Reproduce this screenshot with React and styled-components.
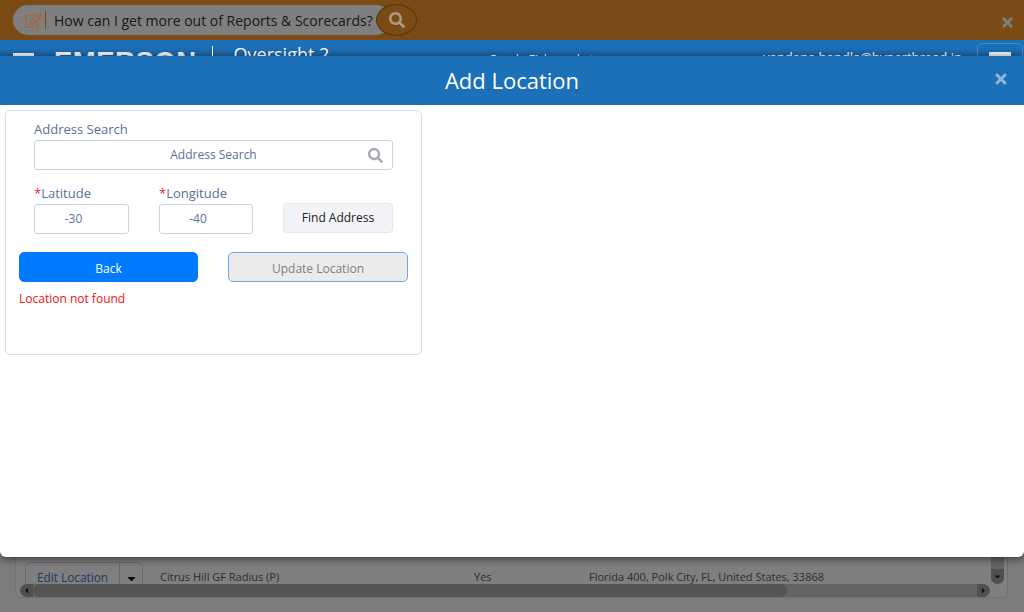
import React from "react";
import styled, { createGlobalStyle } from "styled-components";
import { FaRegEdit, FaSearch, FaTimes, FaCaretDown, FaCaretLeft, FaCaretRight } from "react-icons/fa";

const Global = createGlobalStyle`
  html, body { margin: 0; padding: 0; height: 100%; overflow: hidden; }
  body { font-family: "Open Sans", "Noto Sans", sans-serif; }
  * { box-sizing: border-box; }
`;

const Page = styled.div`
  position: relative;
  width: 1024px;
  height: 612px;
  overflow: hidden;
  background: #f8f8f8;
  display: flex;
  flex-direction: column;
`;

const Banner = styled.div`
  flex: 0 0 40px;
  background: #f4962a;
  display: flex;
  align-items: center;
  padding: 0 9px 0 13px;
`;
const Pill = styled.div`
  width: 378px;
  height: 30px;
  background: #fff;
  border-radius: 15px;
  display: flex;
  align-items: center;
  padding-left: 12px;
  color: #333;
  font-size: 14px;
  white-space: nowrap;
`;
const OverDim = styled.span`
  position: relative;
  z-index: 2;
  display: flex;
  flex: none;
  color: ${(p) => p.$color};
  font-size: ${(p) => p.$size}px;
`;
const PillRule = styled.span`
  width: 1px;
  height: 18px;
  margin: 0 8px 0 3px;
  background: #f4962a;
  flex: none;
`;
const SearchOrb = styled.span`
  width: 41px;
  height: 32px;
  margin-left: -15px;
  border-radius: 50%;
  background: #f4962a;
  border: 1px solid #a8661c;
  display: flex;
  align-items: center;
  justify-content: center;
`;
const BannerClose = styled.span`
  margin-left: auto;
  margin-top: 5px;
  color: #fff;
  font-size: 15px;
  display: flex;
`;

const Nav = styled.div`
  position: relative;
  z-index: 2;
  flex: 0 0 40px;
  background: linear-gradient(#1c70b8 0, #1c70b8 8px, #1c5f9c 16px);
  color: #fff;
  display: flex;
  align-items: flex-start;
  overflow: hidden;
`;
const NavBurger = styled.span`
  width: 21px;
  height: 4px;
  margin: 13px 20px 0 13px;
  background: #f0f0f0;
  flex: none;
`;
const Brand = styled.span`
  font-family: "Liberation Sans", sans-serif;
  font-weight: 700;
  font-size: 27.5px;
  line-height: 30px;
  margin-top: 7px;
  letter-spacing: 0.5px;
  color: #f2f2f2;
`;
const NavRule = styled.span`
  width: 1px;
  height: 30px;
  margin: 6px 21px 0 15px;
  background: #fff;
`;
const AppName = styled.span`
  font-size: 18px;
  line-height: 24px;
  margin-top: 2px;
`;
const Farm = styled.span`
  font-size: 12px;
  line-height: 16px;
  margin: 12px 0 0 161px;
`;
const Email = styled.span`
  font-size: 13px;
  line-height: 18px;
  margin: 8px 0 0 auto;
`;
const NavMenu = styled.span`
  width: 46px;
  height: 34px;
  margin: 3px 1px 0 15px;
  border: 1px solid #3f8ccf;
  border-radius: 5px;
  display: flex;
  justify-content: center;
  padding-top: 8px;
  &::before { content: ""; width: 22px; height: 6px; background: #f0f0f0; border-radius: 1px; }
`;

const Panel = styled.div`
  margin: auto 16px 14px 15px;
  height: 60px;
  background: #ffffff;
  border: 1px solid #dfe3ea;
  border-radius: 5px;
  position: relative;
  overflow: hidden;
  display: flex;
  align-items: flex-start;
  padding: 23px 0 0 9px;
  font-size: 11px;
  color: #505a70;
`;
const SplitBtn = styled.div`
  width: 118px;
  height: 30px;
  flex: none;
  border: 1px solid #cfd3dc;
  border-radius: 5px;
  display: flex;
  color: #3a6fd0;
  font-size: 11.8px;
`;
const SplitLabel = styled.span`
  flex: 1;
  padding: 6px 0 0 11px;
  border-right: 1px solid #cfd3dc;
`;
const SplitCaret = styled.span`
  width: 22px;
  display: flex;
  justify-content: center;
  padding-top: 9px;
  color: #111;
  font-size: 13px;
`;
const Cell = styled.span`
  flex: none;
  width: ${(p) => p.$w}px;
  padding-top: 7px;
  white-space: nowrap;
`;
const HBar = styled.div`
  position: absolute;
  left: 4px;
  right: 17px;
  bottom: 0;
  height: 13px;
  background: #cacaca;
  border-radius: 7px;
  overflow: hidden;
`;
const HThumb = styled.div`
  position: absolute;
  left: 13px;
  width: 754px;
  top: 0;
  bottom: 0;
  border-radius: 7px;
  background: #a8a8a8;
`;
const ArrowBtn = styled.span`
  position: absolute;
  top: 0;
  ${(p) => p.$side}: 0;
  width: 13px;
  height: 13px;
  background: #a0a0a0;
  border-radius: ${(p) => (p.$side === "left" ? "7px 0 0 7px" : "0 7px 7px 0")};
  color: #222;
  display: flex;
  align-items: center;
  justify-content: center;
  font-size: 9px;
`;
const VBar = styled.div`
  position: absolute;
  right: 3px;
  top: 0;
  bottom: 13px;
  width: 13px;
  background: #cacaca;
  border-radius: 0 0 7px 7px;
`;
const VArrow = styled.span`
  position: absolute;
  bottom: 0;
  left: 0;
  right: 0;
  height: 15px;
  background: #a0a0a0;
  border-radius: 0 0 7px 7px;
  color: #222;
  display: flex;
  align-items: center;
  justify-content: center;
  font-size: 9px;
`;

const Backdrop = styled.div`
  position: absolute;
  inset: 0;
  z-index: 1;
  background: rgba(0, 0, 0, 0.5);
`;

const Modal = styled.div`
  position: absolute;
  z-index: 3;
  left: 0;
  right: 0;
  top: 56px;
  height: 501px;
  background: #fff;
  border-radius: 0 0 6px 6px;
  box-shadow: 0 2px 8px rgba(0, 0, 0, 0.55);
`;
const ModalHead = styled.div`
  height: 49px;
  background: #1c70b8;
  color: #fff;
  display: flex;
  align-items: center;
  justify-content: center;
  position: relative;
  font-size: 22px;
  padding-bottom: 1px;
`;
const ModalClose = styled.span`
  position: absolute;
  top: 15px;
  right: 15px;
  color: #8db8dc;
  font-size: 16px;
  display: flex;
`;
const Card = styled.div`
  width: 417px;
  height: 245px;
  margin: 5px 0 0 5px;
  border: 1px solid #d9dde8;
  border-radius: 5px;
  padding: 9px 13px 0 13px;
  font-size: 12px;
`;
const Fields = styled.div`
  padding: 0 15px;
  display: grid;
  grid-template-columns: 95px 94px 110px;
  column-gap: 30px;
  justify-content: space-between;
`;
const SearchField = styled.div`
  grid-column: 1 / -1;
  margin-bottom: 14px;
`;
const Label = styled.div`
  font-size: 13px;
  line-height: 18px;
  color: #5a6f9c;
  margin-bottom: 2px;
  height: 18px;
  white-space: nowrap;
`;
const Req = styled.span`
  color: #f02020;
`;
const InputBox = styled.div`
  height: 30px;
  border: 1px solid #ccd0dc;
  border-radius: 3px;
  background: #fff;
  display: flex;
  align-items: center;
  justify-content: center;
  color: #5a6f9c;
  position: relative;
  padding-right: ${(p) => (p.$numeric ? 16 : 0)}px;
  padding-bottom: 1px;
`;
const InputIcon = styled.span`
  position: absolute;
  right: 9px;
  top: 7px;
  color: #a4a8ae;
  font-size: 15px;
  display: flex;
`;
const FindBtn = styled.div`
  height: 30px;
  margin-top: 19px;
  background: #f3f4f8;
  border: 1px solid #e4e6ee;
  border-radius: 4px;
  display: flex;
  align-items: center;
  justify-content: center;
  color: #222;
  padding-bottom: 1px;
`;
const Actions = styled.div`
  display: grid;
  grid-template-columns: 179px 180px;
  justify-content: space-between;
  margin-top: 18px;
`;
const Action = styled.div`
  height: 30px;
  border-radius: 5px;
  display: flex;
  align-items: center;
  justify-content: center;
  padding-top: 2px;
  background: ${(p) => (p.$primary ? "#007bff" : "#ebebeb")};
  color: ${(p) => (p.$primary ? "#fff" : "#808080")};
  border: 1px solid ${(p) => (p.$primary ? "#007bff" : "#6aa8ee")};
`;
const ErrorText = styled.div`
  color: #f01010;
  margin-top: 8px;
  line-height: 18px;
`;

export default function App() {
  return (
    <Page>
      <Global />
      <Banner>
        <Pill>
          <OverDim $color="#a5663a" $size={17}><FaRegEdit /></OverDim>
          <PillRule />
          How can I get more out of Reports &amp; Scorecards?
        </Pill>
        <SearchOrb>
          <OverDim $color="#b09a80" $size={16}><FaSearch /></OverDim>
        </SearchOrb>
        <BannerClose><FaTimes /></BannerClose>
      </Banner>
      <Nav>
        <NavBurger />
        <Brand>EMERSON</Brand>
        <NavRule />
        <AppName>Oversight 2</AppName>
        <Farm>Panda Fish market</Farm>
        <Email>vandana.handla@hyperthread.in</Email>
        <NavMenu />
      </Nav>
      <Panel>
        <SplitBtn>
          <SplitLabel>Edit Location</SplitLabel>
          <SplitCaret><FaCaretDown /></SplitCaret>
        </SplitBtn>
        <Cell $w={17} />
        <Cell $w={314}>Citrus Hill GF Radius (P)</Cell>
        <Cell $w={115}>Yes</Cell>
        <Cell $w={320}>Florida 400, Polk City, FL, United States, 33868</Cell>
        <VBar><VArrow><FaCaretDown /></VArrow></VBar>
        <HBar>
          <HThumb />
          <ArrowBtn $side="left"><FaCaretLeft /></ArrowBtn>
          <ArrowBtn $side="right"><FaCaretRight /></ArrowBtn>
        </HBar>
      </Panel>
      <Backdrop />
      <Modal>
        <ModalHead>
          Add Location
          <ModalClose><FaTimes /></ModalClose>
        </ModalHead>
        <Card>
          <Fields>
            <SearchField>
              <Label>Address Search</Label>
              <InputBox>
                Address Search
                <InputIcon><FaSearch /></InputIcon>
              </InputBox>
            </SearchField>
            <div>
              <Label><Req>*</Req>Latitude</Label>
              <InputBox $numeric>-30</InputBox>
            </div>
            <div>
              <Label><Req>*</Req>Longitude</Label>
              <InputBox $numeric>-40</InputBox>
            </div>
            <FindBtn>Find Address</FindBtn>
          </Fields>
          <Actions>
            <Action $primary>Back</Action>
            <Action>Update Location</Action>
          </Actions>
          <ErrorText>Location not found</ErrorText>
        </Card>
      </Modal>
    </Page>
  );
}
